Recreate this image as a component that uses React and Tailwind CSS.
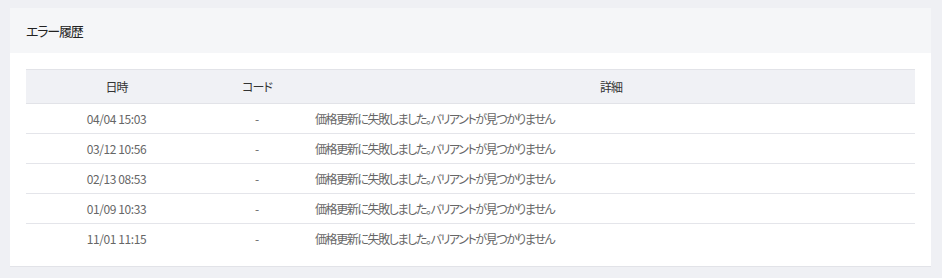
export default function App() {
  const rows = [
    ["04/04 15:03", "-", "価格更新に失敗しました。バリアントが見つかりません"],
    ["03/12 10:56", "-", "価格更新に失敗しました。バリアントが見つかりません"],
    ["02/13 08:53", "-", "価格更新に失敗しました。バリアントが見つかりません"],
    ["01/09 10:33", "-", "価格更新に失敗しました。バリアントが見つかりません"],
    ["11/01 11:15", "-", "価格更新に失敗しました。バリアントが見つかりません"],
  ];
  return (
    <div
      className="w-[942px] h-[278px] bg-[#eff0f4] pt-[8px] pl-[10px] pr-[11px] [font-feature-settings:'palt']"
      style={{ fontFamily: '"Noto Sans CJK JP", "Noto Sans", sans-serif' }}
    >
      <div className="bg-white border-b border-[#e2e3e8]">
        <div className="h-[45px] bg-[#f5f6f8] flex items-center px-[16px] text-[13px] tracking-[-1.2px] text-[#222]">
          エラー履歴
        </div>
        <div className="px-[16px] pt-[16px] pb-[12px]">
          <div className="grid grid-cols-[181px_100px_1fr] h-[35px] bg-[#f0f1f5] border-t border-b border-[#e2e3e8] items-center text-[12px] tracking-[-1px] text-[#333]">
            <div className="text-center">日時</div>
            <div className="text-center">コード</div>
            <div className="text-center">詳細</div>
          </div>
          {rows.map((r, i) => (
            <div
              key={i}
              className={
                "grid grid-cols-[181px_100px_1fr] h-[30px] items-center text-[12px] text-[#666] " +
                (i < rows.length - 1 ? "border-b border-[#e4e5ea]" : "")
              }
            >
              <div className="text-center tracking-[-0.4px]">{r[0]}</div>
              <div className="text-center">{r[1]}</div>
              <div className="pl-[8px] tracking-[-1.4px]">{r[2]}</div>
            </div>
          ))}
        </div>
      </div>
    </div>
  );
}
